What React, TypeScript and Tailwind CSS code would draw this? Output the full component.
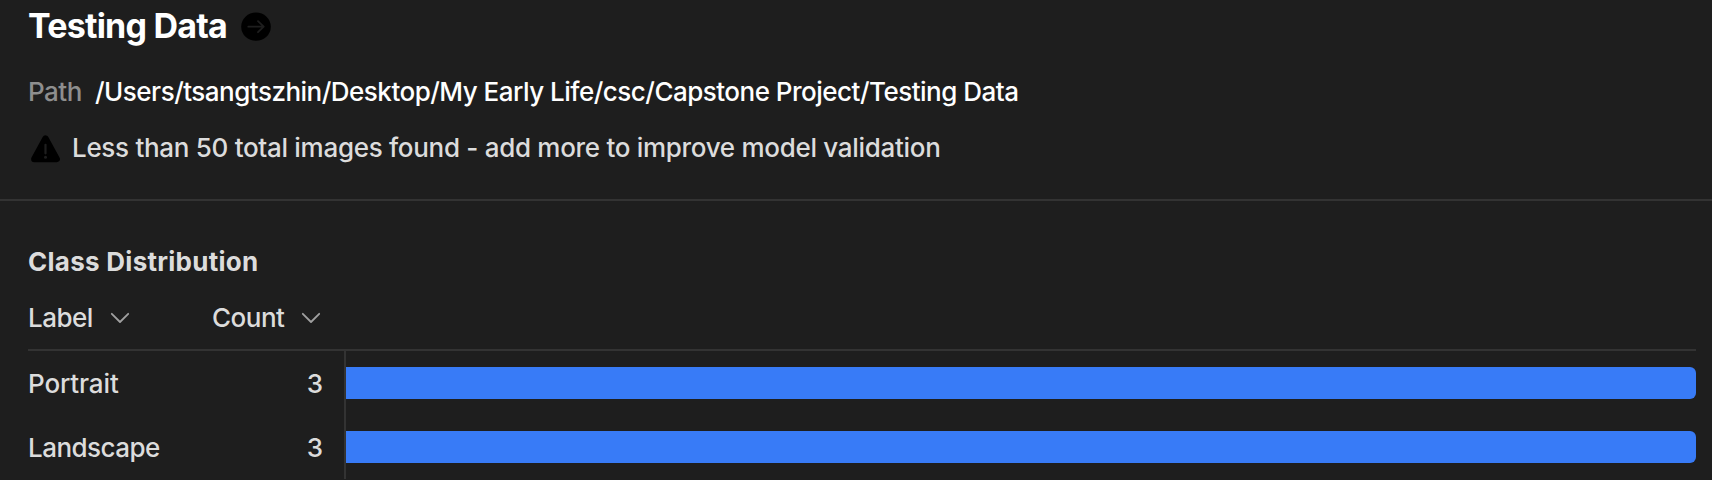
const rows = [
  { label: "Portrait", count: 3, tracking: "tracking-[-0.13px]" },
  { label: "Landscape", count: 3, tracking: "tracking-[-0.52px]" },
];
const max = Math.max(...rows.map((r) => r.count));

function Chevron() {
  return (
    <svg className="h-3 w-5" viewBox="0 0 20 12" fill="none" stroke="#a0a0a0" strokeWidth="1.8" strokeLinecap="round" strokeLinejoin="round">
      <path d="M1.8 1.8 10 10l8.2-8.2" />
    </svg>
  );
}

export default function App() {
  return (
    <main className="flex h-[480px] flex-col overflow-hidden bg-[#1e1e1e] font-['Inter',sans-serif] text-[26px] leading-8 font-[450] whitespace-nowrap text-[#dcdcdc]">
      <section className="h-[201px] shrink-0 border-b-2 border-[#333333] pl-7">
        <div className="flex h-[52px] items-center">
          <h1 className="w-[213px] text-[34px] font-bold tracking-[-0.78px] text-white">Testing Data</h1>
          <svg className="mt-0.5 size-[30px]" viewBox="0 0 30 30" fill="none">
            <ellipse cx="15" cy="14.7" rx="14.8" ry="14.1" fill="#000" />
            <path d="M7.3 14.7h15M17 9.2l5.7 5.5-5.7 5.5" stroke="#1e1e1e" strokeWidth="1.8" strokeLinecap="round" strokeLinejoin="round" />
          </svg>
        </div>
        <div className="mt-6 flex">
          <span className="w-[67px] tracking-[-0.5px] text-[#8e8e8e]">Path</span>
          <span className="tracking-[-0.51px] text-white">/Users/tsangtszhin/Desktop/My Early Life/csc/Capstone Project/Testing Data</span>
        </div>
        <div className="mt-6 flex">
          <svg className="mt-0.5 mr-[11px] ml-[2px] h-[30px] w-[31px]" viewBox="0 0 31 30" fill="none">
            <path d="M15.5 4.5 26.7 25H4.3Z" fill="#000" stroke="#000" strokeWidth="6.4" strokeLinejoin="round" />
            <path d="M15.5 10.8v8.5" stroke="#1e1e1e" strokeWidth="2.2" strokeLinecap="round" />
            <circle cx="15.5" cy="23.2" r="1.5" fill="#1e1e1e" />
          </svg>
          <span className="tracking-[-0.3px]">Less than 50 total images found - add more to improve model validation</span>
        </div>
      </section>
      <section className="pl-7">
        <h2 className="mt-[45px] font-bold tracking-[0.27px]">Class Distribution</h2>
        <div className="mr-4 flex h-[73px] items-start border-b-2 border-[#333333] pt-6">
          <div className="flex w-[184px] items-center">
            <span className="w-[82px] tracking-[-0.5px]">Label</span>
            <Chevron />
          </div>
          <div className="flex items-center">
            <span className="w-[89px] tracking-[-0.5px]">Count</span>
            <Chevron />
          </div>
        </div>
        {rows.map((r) => (
          <div key={r.label} className="mr-4 flex h-16">
            <div className="flex w-[318px] items-center justify-between border-r-2 border-[#333333] pt-0.5 pr-[21px]">
              <span className={r.tracking}>{r.label}</span>
              <span>{r.count}</span>
            </div>
            <div className="flex flex-1 items-center">
              <div className="h-8 rounded-r-md bg-[#387bf7]" style={{ width: `${(r.count / max) * 100}%` }} />
            </div>
          </div>
        ))}
      </section>
    </main>
  );
}
